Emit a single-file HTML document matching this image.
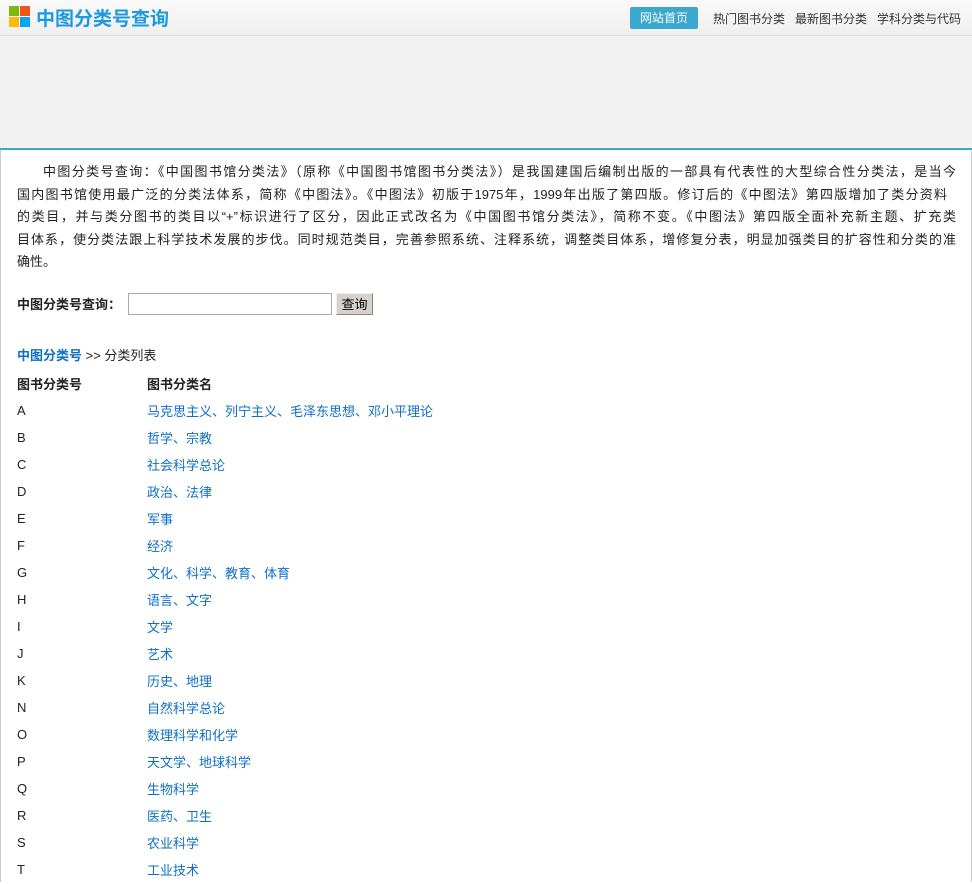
<!DOCTYPE html>
<html><head><meta charset="utf-8"><style>
*{margin:0;padding:0;box-sizing:border-box}
body{width:972px;height:884px;overflow:hidden;background:#fff;font-family:"Liberation Sans","Noto Sans CJK SC",sans-serif;font-size:13px;color:#222}
.hd{height:36px;background:linear-gradient(#fafafa,#efefef);border-bottom:1px solid #ddd;position:relative}
.logo{position:absolute;left:9px;top:6px;width:22px;height:22px}
.logo i{position:absolute;width:10px;height:10px}
.title{position:absolute;left:36px;top:4px;font-size:19px;font-weight:bold;color:#1a9be0}
.nav{position:absolute;top:10px;font-size:12px;color:#333}
.home{position:absolute;left:630px;top:7px;width:68px;height:22px;background:#3ba8d0;border-radius:2px;color:#fff;font-size:12px;text-align:center;line-height:22px}
.ban{height:114px;background:#f3f2f2;border-bottom:2px solid #3ba8d0}
.main{border-left:1px solid #ccc;border-right:1px solid #ccc;height:732px;padding:11px 15px 0 16px}
.l{line-height:22.6px;white-space:nowrap;text-align:justify;text-align-last:justify;text-justify:inter-character}
.q{margin-top:18px;font-weight:bold;height:24px;display:flex;align-items:center}
.q input{width:204px;height:22px;border:1px solid #aaa;margin-left:7px}
.q button{margin-left:4px;width:37px;height:22px;background:#d6d2cb;border:1px solid #888;border-top-color:#eee;border-left-color:#eee;font-size:13px;font-family:inherit;font-weight:normal}
a{color:#0d6fc7;text-decoration:none}
.crumb{margin-top:29px;height:26px}
.row{height:27px;display:flex;align-items:center}
.row span{width:130px}
.th{font-weight:bold;height:26px}
</style></head><body>
<div class="hd">
<div class="logo"><i style="left:0;top:0;background:#7cb713"></i><i style="left:11px;top:0;background:#f2541c"></i><i style="left:0;top:11px;background:#ffb900"></i><i style="left:11px;top:11px;background:#05a6f0"></i></div>
<div class="title">中图分类号查询</div>
<div class="home">网站首页</div>
<div class="nav" style="left:713px">热门图书分类</div>
<div class="nav" style="left:795px">最新图书分类</div>
<div class="nav" style="left:877px">学科分类与代码</div>
</div>
<div class="ban"></div>
<div class="main">
<div class="l" style="margin-left:26px;width:913px">中图分类号查询：《中国图书馆分类法》（原称《中国图书馆图书分类法》）是我国建国后编制出版的一部具有代表性的大型综合性分类法，是当今</div>
<div class="l" style="width:930px">国内图书馆使用最广泛的分类法体系，简称《中图法》。《中图法》初版于1975年，1999年出版了第四版。修订后的《中图法》第四版增加了类分资料</div>
<div class="l" style="width:939px">的类目，并与类分图书的类目以“+”标识进行了区分，因此正式改名为《中国图书馆分类法》，简称不变。《中图法》第四版全面补充新主题、扩充类</div>
<div class="l" style="width:939px">目体系，使分类法跟上科学技术发展的步伐。同时规范类目，完善参照系统、注释系统，调整类目体系，增修复分表，明显加强类目的扩容性和分类的准</div>
<div class="l" style="text-align-last:left">确性。</div>
<div class="q">中图分类号查询：<input><button>查询</button></div>
<div class="crumb"><a href="#"><b>中图分类号</b></a> &gt;&gt; 分类列表</div>
<div class="row th"><span>图书分类号</span>图书分类名</div>
<div class="row"><span>A</span><a href="#">马克思主义、列宁主义、毛泽东思想、邓小平理论</a></div>
<div class="row"><span>B</span><a href="#">哲学、宗教</a></div>
<div class="row"><span>C</span><a href="#">社会科学总论</a></div>
<div class="row"><span>D</span><a href="#">政治、法律</a></div>
<div class="row"><span>E</span><a href="#">军事</a></div>
<div class="row"><span>F</span><a href="#">经济</a></div>
<div class="row"><span>G</span><a href="#">文化、科学、教育、体育</a></div>
<div class="row"><span>H</span><a href="#">语言、文字</a></div>
<div class="row"><span>I</span><a href="#">文学</a></div>
<div class="row"><span>J</span><a href="#">艺术</a></div>
<div class="row"><span>K</span><a href="#">历史、地理</a></div>
<div class="row"><span>N</span><a href="#">自然科学总论</a></div>
<div class="row"><span>O</span><a href="#">数理科学和化学</a></div>
<div class="row"><span>P</span><a href="#">天文学、地球科学</a></div>
<div class="row"><span>Q</span><a href="#">生物科学</a></div>
<div class="row"><span>R</span><a href="#">医药、卫生</a></div>
<div class="row"><span>S</span><a href="#">农业科学</a></div>
<div class="row"><span>T</span><a href="#">工业技术</a></div>
</div>
</body></html>
